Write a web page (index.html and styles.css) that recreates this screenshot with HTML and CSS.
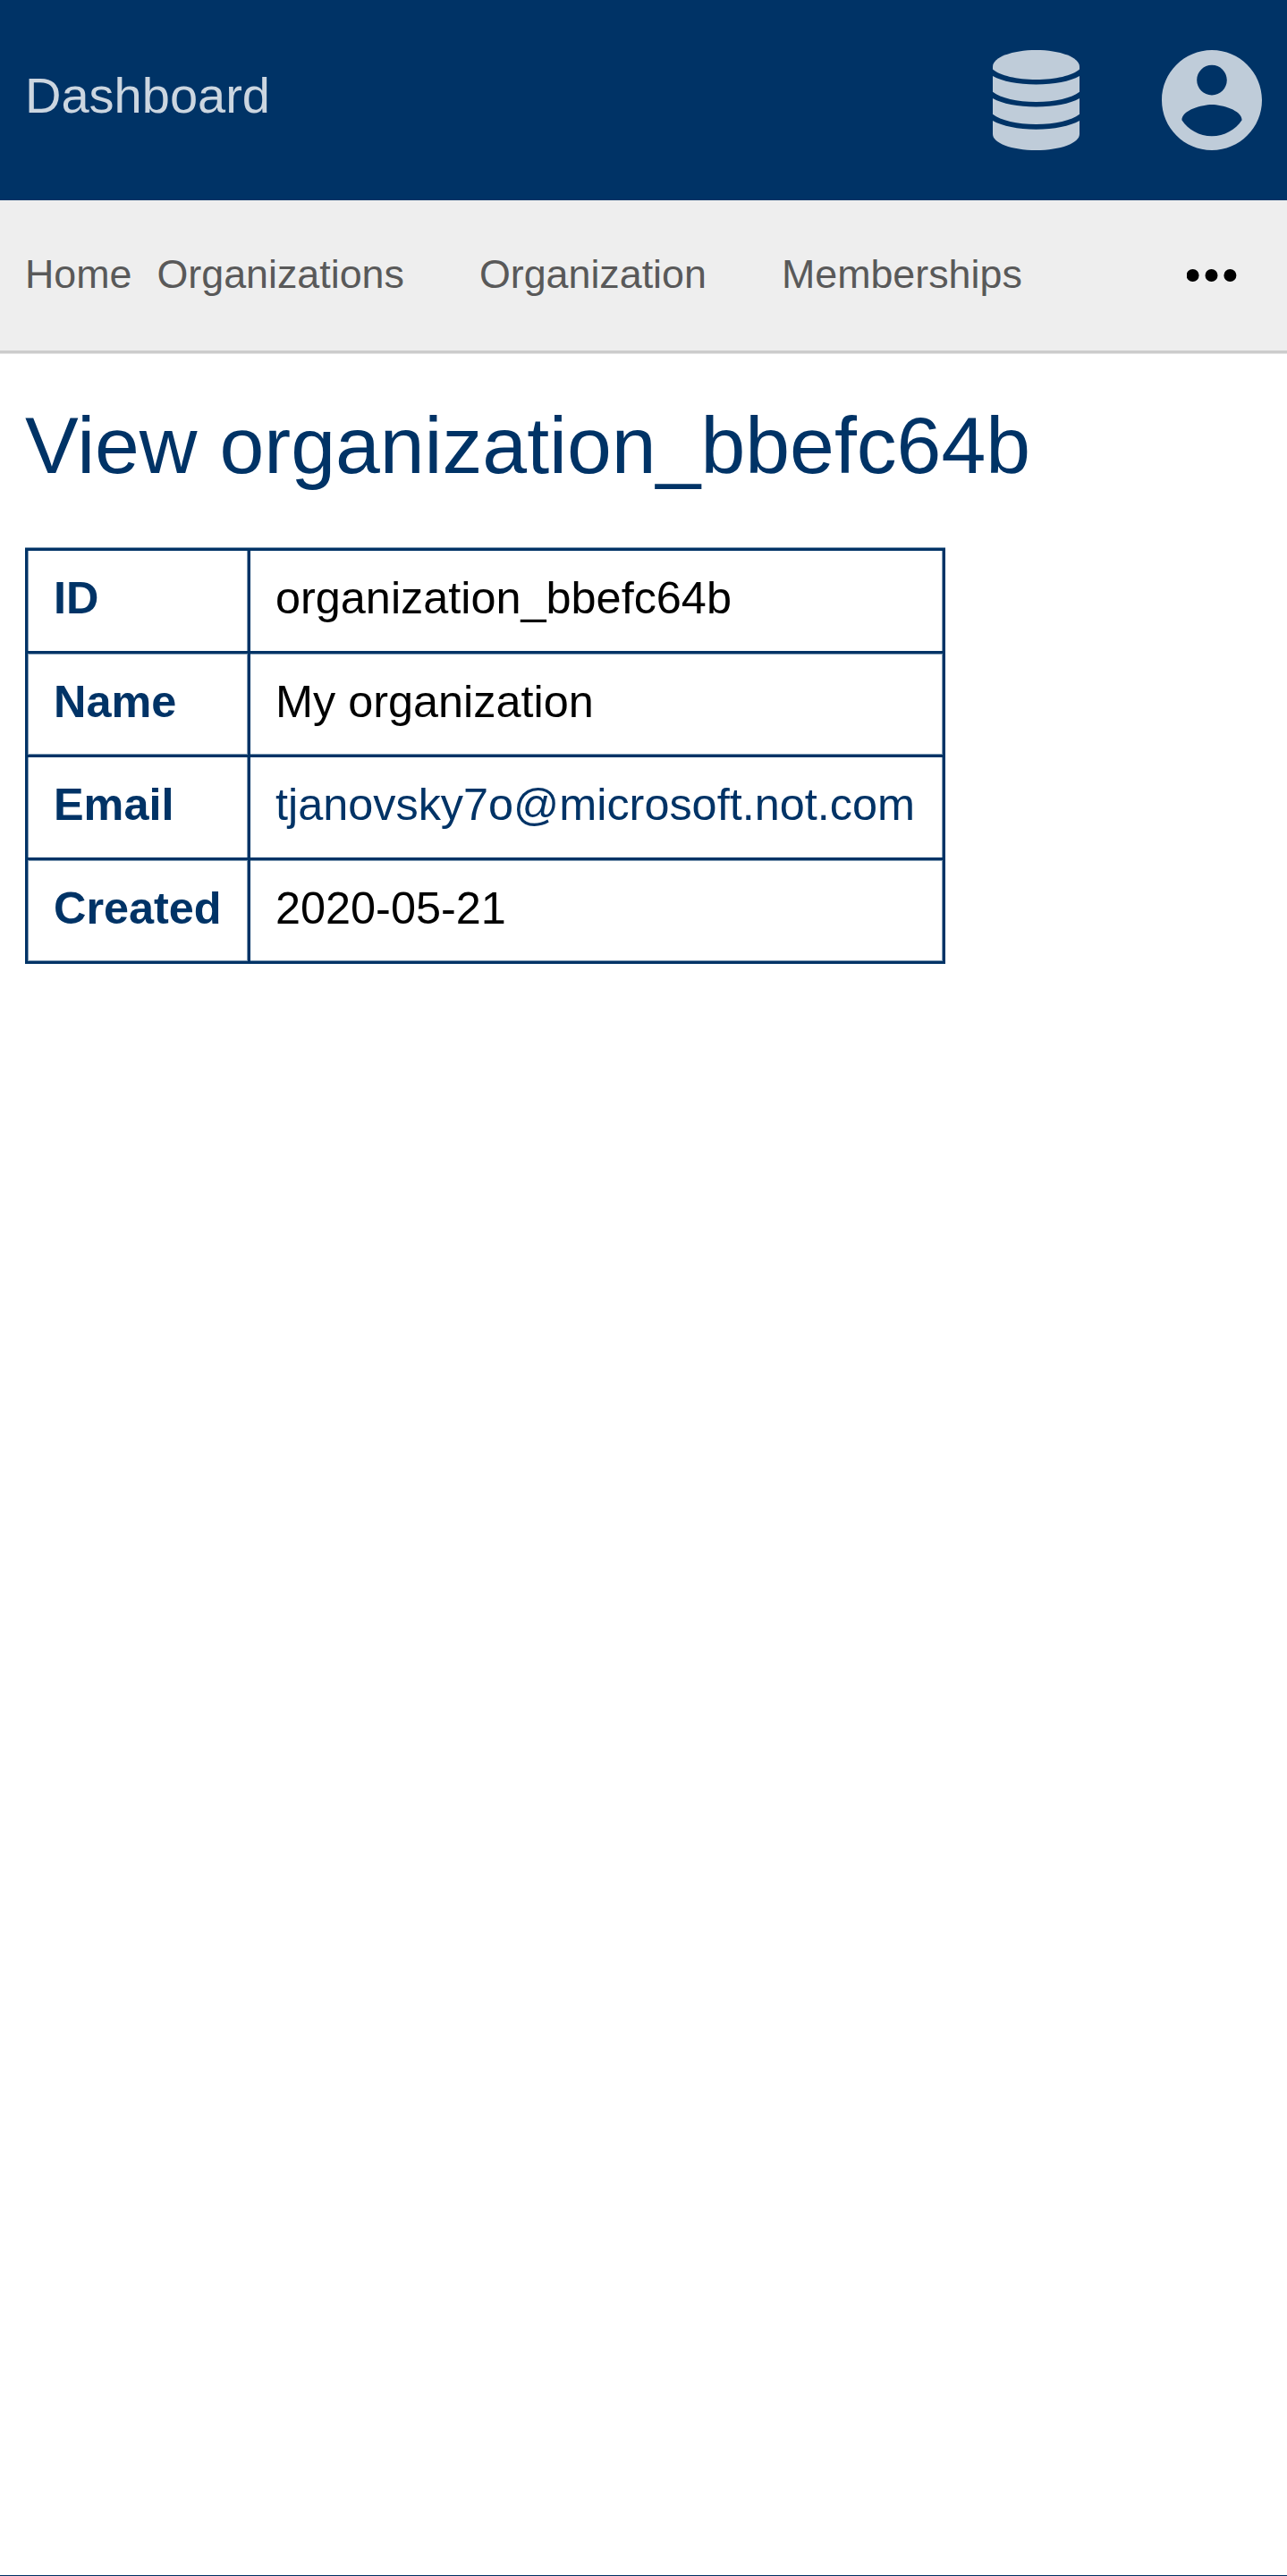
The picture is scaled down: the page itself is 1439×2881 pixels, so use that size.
FILE: index.html
```html
<!DOCTYPE html>
<html lang="en">
<head>
<meta charset="utf-8">
<title>Dashboard</title>
<link rel="stylesheet" href="styles.css">
</head>
<body>
<header class="topbar">
  <a class="brand">Dashboard</a>
  <div class="actions">
    <svg class="icon-db" viewBox="0 0 97 112" aria-hidden="true">
      <path d="M0 18.500C0 8 22 0 48.500 0S97 8 97 18.500V21.500C89 28.500 70 33 48.500 33S8 28.500 0 21.500Z"/>
      <path d="M0 29C11 35 28 38.500 48.500 38.500S86 35 97 29V46.700C88 53.500 70 58 48.500 58S9 53.500 0 46.700Z"/>
      <path d="M0 54C11 60 28 63.500 48.500 63.500S86 60 97 54V71.700C88 78.500 70 83 48.500 83S9 78.500 0 71.700Z"/>
      <path d="M0 79C11 85 28 88.700 48.500 88.700S86 85 97 79V94C97 104 76 112 48.500 112S0 104 0 94Z"/>
    </svg>
    <svg class="icon-user" viewBox="2 2 20 20" aria-hidden="true">
      <path d="M12 2C6.480 2 2 6.480 2 12s4.480 10 10 10 10-4.480 10-10S17.520 2 12 2zm0 3c1.660 0 3 1.340 3 3s-1.340 3-3 3-3-1.340-3-3 1.340-3 3-3zm0 14.200c-2.500 0-4.710-1.280-6-3.220.03-1.990 4-3.080 6-3.080 1.990 0 5.970 1.090 6 3.080-1.290 1.940-3.500 3.220-6 3.220z"/>
    </svg>
  </div>
</header>
<nav class="subnav">
  <a>Home</a>
  <div class="links"><a>Organizations</a><a>Organization</a><a>Memberships</a></div>
  <svg class="icon-more" viewBox="0 0 56 14" aria-hidden="true"><circle cx="6.600" cy="7" r="7"/><circle cx="27.500" cy="7" r="7"/><circle cx="48.400" cy="7" r="7"/></svg>
</nav>
<main class="content">
  <h1>View organization_bbefc64b</h1>
  <table class="details">
    <tr><th>ID</th><td>organization_bbefc64b</td></tr>
    <tr><th>Name</th><td>My organization</td></tr>
    <tr><th>Email</th><td><a>tjanovsky7o@microsoft.not.com</a></td></tr>
    <tr><th>Created</th><td>2020-05-21</td></tr>
  </table>
</main>
<footer class="footer"></footer>
</body>
</html>
```
FILE: styles.css
```css
* { box-sizing: border-box; }
body {
  margin: 0;
  height: 2881px;
  display: flex;
  flex-direction: column;
  background: #fff;
  color: #000;
  font-family: "Liberation Sans", Arial, sans-serif;
}
.topbar {
  height: 224px;
  padding: 0 28.5px 0 28px;
  display: flex;
  justify-content: space-between;
  align-items: center;
  background: #003366;
}
.brand {
  padding-bottom: 11px;
  font-size: 56px;
  line-height: 63px;
  color: #ccd6e0;
}
.actions { display: flex; gap: 91.5px; fill: #bfccd9; }
.icon-db { width: 97px; height: 112px; }
.icon-user { width: 112px; height: 112px; }
.subnav {
  height: 172px;
  padding: 57px 56px 0 28px;
  display: flex;
  align-items: flex-start;
  gap: 28px;
  background: #eee;
  border-bottom: 1px solid #e5e5e5;
  box-shadow: inset 0 -3px #ccc;
  font-size: 44.8px;
  line-height: 50px;
  color: #595959;
}
.links { display: flex; gap: 84px; }
.icon-more { width: 56px; height: 14px; margin: 20px 0 0 auto; fill: #000; }
.content { flex: 1; padding: 52px 28px 0; }
h1 {
  margin: 0 0 65px;
  font-size: 89.6px;
  font-weight: 400;
  line-height: 100px;
  color: #003366;
}
.details {
  width: 1029px;
  table-layout: fixed;
  border-spacing: 3px;
  background: #003366;
  box-shadow: 0 -1px #7f99b2;
  font-size: 50.4px;
  line-height: 57px;
}
th, td { height: 112px; padding: 24px 27px 0 28px; background: #fff; text-align: left; vertical-align: top; white-space: nowrap; }
th { width: 246px; padding-left: 29px; color: #003366; box-shadow: inset 1px 0 #7f99b2, inset -1px 0 #7f99b2; }
td { box-shadow: inset -1px 0 #7f99b2; }
td a { color: #003366; }
tr:nth-child(even) > * { height: 113px; padding-top: 25px; }
tr:nth-child(even) > th { box-shadow: inset 0 1px #7f99b2, inset 0 -1px #7f99b2, inset 1px 0 #7f99b2, inset -1px 0 #7f99b2; }
tr:nth-child(even) > td { box-shadow: inset 0 1px #7f99b2, inset 0 -1px #7f99b2, inset -1px 0 #7f99b2; }
.footer { height: 1px; background: #003366; }
```
